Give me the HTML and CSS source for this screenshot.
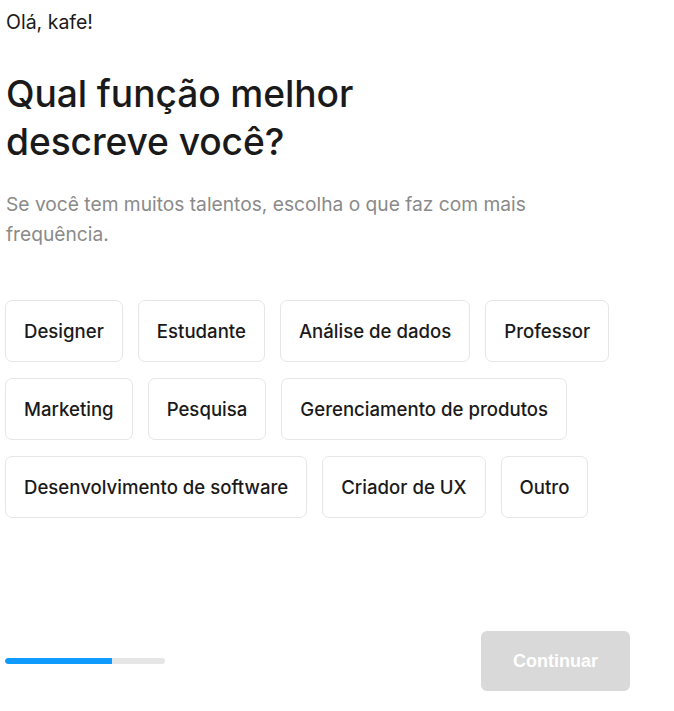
FILE: index.html
```html
<!DOCTYPE html>
<html lang="pt">
<head>
<meta charset="utf-8">
<title>Qual função melhor descreve você?</title>
<link rel="stylesheet" href="styles.css">
</head>
<body>
<main class="page">
  <p class="greeting">Olá, kafe!</p>
  <h1 class="title">Qual função melhor descreve você?</h1>
  <p class="subtitle">Se você tem muitos talentos, escolha o que faz com mais frequência.</p>
  <div class="chips">
    <button class="chip">Designer</button>
    <button class="chip">Estudante</button>
    <button class="chip">Análise de dados</button>
    <button class="chip">Professor</button>
    <button class="chip">Marketing</button>
    <button class="chip">Pesquisa</button>
    <button class="chip">Gerenciamento de produtos</button>
    <button class="chip">Desenvolvimento de software</button>
    <button class="chip">Criador de UX</button>
    <button class="chip">Outro</button>
  </div>
  <div class="footer">
    <div class="progress"><div class="progress-fill" style="width: 107px"></div></div>
    <button class="continue" disabled>Continuar</button>
  </div>
</main>
</body>
</html>
```

FILE: styles.css
```css
* { box-sizing: border-box; }
html, body { margin: 0; padding: 0; background: #ffffff; }
body {
  font-family: Inter, "Noto Sans", "Liberation Sans", sans-serif;
  color: #1a1a1a;
}
.page {
  width: 630px;
  padding: 10px 0 0 5px;
}
.greeting {
  margin: 0 0 0 1px;
  font-size: 19.5px;
  line-height: 24px;
  font-weight: 400;
}
.title {
  margin: 36px 0 0 1px;
  max-width: 420px;
  font-size: 37.2px;
  line-height: 48px;
  font-weight: 500;
  letter-spacing: -0.1px;
}
.subtitle {
  margin: 23px 0 0 1px;
  max-width: 580px;
  font-size: 19.2px;
  line-height: 30px;
  color: #8a8a8a;
  font-weight: 400;
}
.chips {
  margin-top: 51px;
  display: flex;
  flex-wrap: wrap;
  column-gap: 15px;
  row-gap: 16px;
  width: 625px;
}
.chip {
  height: 62px;
  padding: 0 18px;
  border: 1px solid #e6e6e6;
  border-radius: 7px;
  background: #ffffff;
  font-family: Inter, "Noto Sans", sans-serif;
  font-size: 18.6px;
  font-weight: 500;
  color: #1a1a1a;
  cursor: pointer;
}
.footer {
  margin-top: 113px;
  width: 625px;
  display: flex;
  justify-content: space-between;
  align-items: center;
}
.progress {
  width: 160px;
  height: 6px;
  border-radius: 3px;
  background: #e6e6e6;
  overflow: hidden;
}
.progress-fill {
  height: 100%;
  background: #0f9aff;
  border-radius: 3px 0 0 3px;
}
.continue {
  width: 149px;
  height: 60px;
  border: none;
  border-radius: 6px;
  background: #d9d9d9;
  color: #ffffff;
  font-family: "Liberation Sans", Arial, sans-serif;
  font-size: 18px;
  font-weight: 700;
}
```
